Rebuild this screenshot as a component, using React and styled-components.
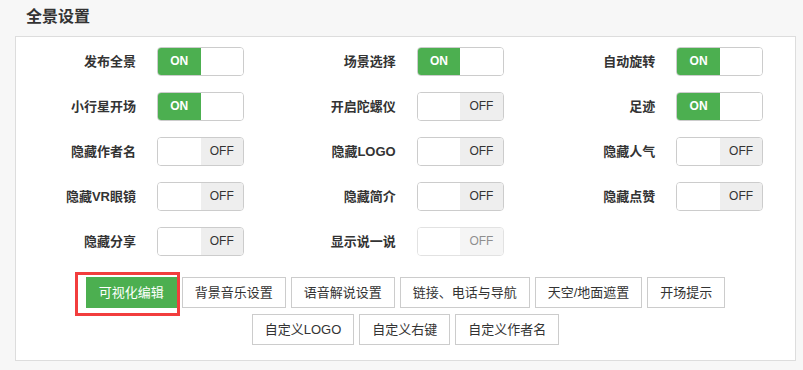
import React from 'react';
import styled, { createGlobalStyle } from 'styled-components';

const GlobalStyle = createGlobalStyle`
  html, body {
    margin: 0;
    padding: 0;
    background: #f7f7f7;
  }
  body {
    font-family: "Liberation Sans", "Noto Sans CJK SC", sans-serif;
    color: #333;
  }
`;

const Page = styled.div`
  width: 803px;
  height: 370px;
  padding: 7px 7px 0 15px;
  box-sizing: border-box;
  background: #f7f7f7;
`;

const Title = styled.h2`
  margin: 0 0 9px 0;
  padding-left: 11px;
  font-size: 16px;
  line-height: 20px;
  font-weight: 700;
  color: #333;
`;

const Panel = styled.div`
  width: 781px;
  height: 325px;
  box-sizing: border-box;
  background: #fff;
  border: 1px solid #ddd;
  padding: 10px 0 0 0;
`;

const SwitchGrid = styled.div`
  display: grid;
  grid-template-columns: repeat(3, 1fr);
  row-gap: 16px;
`;

const Field = styled.div`
  display: flex;
  align-items: center;
  height: 29px;
`;

const Label = styled.span`
  width: 120px;
  margin-right: 21px;
  text-align: right;
  font-size: 13px;
  font-weight: 700;
  line-height: 29px;
  color: #333;
  white-space: nowrap;
`;

const Switch = styled.div`
  display: flex;
  width: 87px;
  height: 29px;
  box-sizing: border-box;
  border: 1px solid #ccc;
  border-radius: 4px;
  overflow: hidden;
  background: #fff;
  opacity: ${({ disabled }) => (disabled ? 0.55 : 1)};
`;

const Half = styled.span`
  flex: 1;
  display: flex;
  align-items: center;
  justify-content: center;
  font-size: 12px;
  line-height: 27px;
`;

const OnHalf = styled(Half)`
  background: #4caf50;
  color: #fff;
  font-weight: 700;
`;

const OffHalf = styled(Half)`
  background: #eee;
  color: #333;
`;

const Blank = styled(Half)`
  background: #fff;
`;

const ButtonArea = styled.div`
  margin-top: 21px;
  display: flex;
  flex-direction: column;
  align-items: center;
  gap: 6px;
`;

const ButtonRow = styled.div`
  display: flex;
  justify-content: center;
  gap: 5px;
`;

const Btn = styled.button`
  position: relative;
  height: 31px;
  box-sizing: border-box;
  padding: 0 12px;
  border: 1px solid ${({ primary }) => (primary ? '#4caf50' : '#ccc')};
  border-radius: 0;
  background: ${({ primary }) => (primary ? '#4caf50' : '#fff')};
  color: ${({ primary }) => (primary ? '#fff' : '#333')};
  font-family: inherit;
  font-size: 13px;
  line-height: 29px;
  white-space: nowrap;
  cursor: pointer;
`;

const Highlight = styled.span`
  position: absolute;
  left: -12px;
  top: -6px;
  right: -4px;
  bottom: -9px;
  border: 3px solid #f23d3d;
  pointer-events: none;
`;

const switches = [
  { label: '发布全景', on: true },
  { label: '场景选择', on: true },
  { label: '自动旋转', on: true },
  { label: '小行星开场', on: true },
  { label: '开启陀螺仪', on: false },
  { label: '足迹', on: true },
  { label: '隐藏作者名', on: false },
  { label: '隐藏LOGO', on: false },
  { label: '隐藏人气', on: false },
  { label: '隐藏VR眼镜', on: false },
  { label: '隐藏简介', on: false },
  { label: '隐藏点赞', on: false },
  { label: '隐藏分享', on: false },
  { label: '显示说一说', on: false, disabled: true },
];

const rowOne = ['背景音乐设置', '语音解说设置', '链接、电话与导航', '天空/地面遮置', '开场提示'];
const rowTwo = ['自定义LOGO', '自定义右键', '自定义作者名'];

function Toggle({ on, disabled }) {
  return (
    <Switch disabled={disabled}>
      {on ? (
        <>
          <OnHalf>ON</OnHalf>
          <Blank />
        </>
      ) : (
        <>
          <Blank />
          <OffHalf>OFF</OffHalf>
        </>
      )}
    </Switch>
  );
}

export default function App() {
  return (
    <>
      <GlobalStyle />
      <Page>
        <Title>全景设置</Title>
        <Panel>
          <SwitchGrid>
            {switches.map((s) => (
              <Field key={s.label}>
                <Label>{s.label}</Label>
                <Toggle on={s.on} disabled={s.disabled} />
              </Field>
            ))}
          </SwitchGrid>
          <ButtonArea>
            <ButtonRow>
              <Btn primary>
                可视化编辑
                <Highlight />
              </Btn>
              {rowOne.map((t) => (
                <Btn key={t}>{t}</Btn>
              ))}
            </ButtonRow>
            <ButtonRow>
              {rowTwo.map((t) => (
                <Btn key={t}>{t}</Btn>
              ))}
            </ButtonRow>
          </ButtonArea>
        </Panel>
      </Page>
    </>
  );
}
